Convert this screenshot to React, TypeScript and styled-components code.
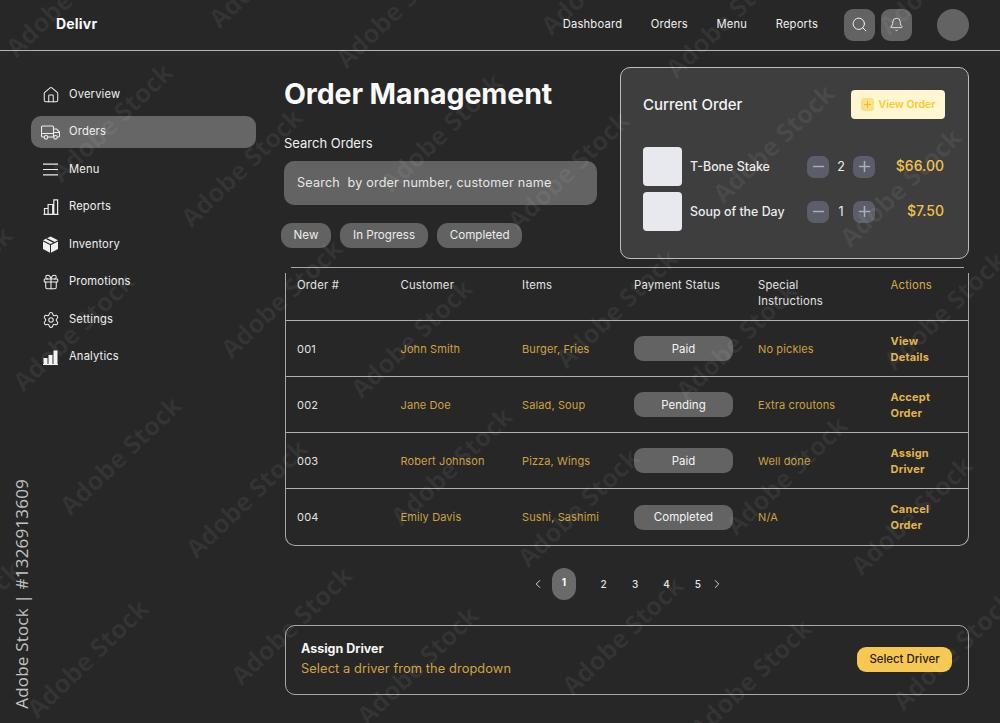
import React from "react";
import styled, { createGlobalStyle } from "styled-components";
import { Search, Bell, Home, Gift, Settings, ChevronLeft, ChevronRight, Plus, Minus } from "lucide-react";

const Global = createGlobalStyle`
  html, body { margin: 0; padding: 0; background: #272727; }
  * { box-sizing: border-box; }
  body { font-family: Inter, "Liberation Sans", sans-serif; color: #f0f0f0; }
`;

const Page = styled.div`
  position: relative;
  width: 1000px;
  height: 723px;
  overflow: hidden;
  background: #272727;
`;

const TopBar = styled.header`
  height: 51px;
  border-bottom: 1px solid #b4b4b4;
  display: flex;
  align-items: center;
  padding: 0 31px 1px 56px;
`;

const Brand = styled.div`
  font-size: 14px;
  font-weight: 700;
  letter-spacing: 0.2px;
  color: #fafafa;
  flex: 1;
  margin-bottom: 2px;
`;

const TopNav = styled.nav`
  display: flex;
  gap: 28.5px;
  margin-right: 26px;
  margin-bottom: 1px;
`;

const TopLink = styled.a`
  font-size: 11.2px;
  font-weight: 400;
  letter-spacing: 0.2px;
  color: #f0f0f0;
`;

const IconSquare = styled.button`
  width: 31px;
  height: 32px;
  border-radius: 9px;
  border: 0;
  background: #636363;
  color: #f0f0f0;
  display: grid;
  place-items: center;
  padding: 0;
  & + & { margin-left: 6px; }
`;

const Avatar = styled.div`
  width: 32px;
  height: 32px;
  border-radius: 50%;
  background: #636363;
  margin-left: 25px;
`;

const Body = styled.div`
  display: flex;
  padding-left: 31px;
`;

const Sidebar = styled.aside`
  width: 225px;
  margin-right: 29px;
  padding-top: 27.5px;
  display: flex;
  flex-direction: column;
  gap: 5.5px;
`;

const NavItem = styled.div<{ $active?: boolean }>`
  height: 32px;
  border-radius: 10px;
  display: flex;
  align-items: center;
  padding-left: 10px;
  font-size: 11.2px;
  font-weight: 400;
  letter-spacing: 0.15px;
  color: #f0f0f0;
  background: ${(p) => (p.$active ? "#666666" : "transparent")};
`;

const NavIconSlot = styled.span`
  width: 19px;
  height: 20px;
  margin-right: 9px;
  display: grid;
  place-items: center;
  flex: none;
`;

const NavLabel = styled.span`
  padding-bottom: 2px;
`;

const Main = styled.main`
  width: 684px;
  display: flex;
  flex-direction: column;
`;

const TopRow = styled.div`
  display: flex;
  justify-content: space-between;
  padding-top: 16px;
  height: 216px;
`;

const LeftCol = styled.div`
  width: 313px;
  margin-left: -1px;
`;

const Title = styled.h1`
  margin: 8px 0 0;
  font-size: 28.5px;
  line-height: 38px;
  font-weight: 700;
  letter-spacing: -0.1px;
  color: #fafafa;
  white-space: nowrap;
`;

const SearchLabel = styled.div`
  margin-top: 21px;
  font-size: 13px;
  font-weight: 400;
  line-height: 18px;
  color: #f0f0f0;
`;

const SearchBox = styled.div`
  margin-top: 9px;
  height: 44px;
  border-radius: 10px;
  background: #636363;
  display: flex;
  align-items: center;
  padding: 0 0 2px 13px;
  font-size: 12.6px;
  letter-spacing: 0.2px;
  color: #e6e6e6;
  white-space: pre;
`;

const Filters = styled.div`
  display: flex;
  gap: 9.5px;
  margin: 18px 0 0 -3px;
`;

const Pill = styled.span`
  height: 25px;
  border-radius: 11px;
  background: #626262;
  padding: 0 12.6px 2px;
  display: flex;
  align-items: center;
  font-size: 11.6px;
  font-weight: 400;
  color: #ececec;
`;

const OrderCard = styled.section`
  width: 349px;
  height: 192px;
  border: 1px solid #bdbdbd;
  border-radius: 10px;
  background: #3e3e3e;
  padding: 22px 23px 0 22px;
`;

const CardHead = styled.div`
  display: flex;
  align-items: center;
  justify-content: space-between;
  margin-bottom: 28px;
`;

const CardTitle = styled.div`
  font-size: 15px;
  font-weight: 500;
  color: #f5f5f5;
`;

const ViewBtn = styled.div`
  width: 94px;
  height: 29px;
  border-radius: 4px;
  background: #fff6d2;
  color: #f7c92f;
  font-size: 10.5px;
  font-weight: 600;
  display: flex;
  align-items: center;
  justify-content: center;
  gap: 5px;
`;

const PlusChip = styled.span`
  width: 13px;
  height: 13px;
  border-radius: 3px;
  background: #fbe08a;
  display: grid;
  place-items: center;
  color: #f3b91f;
`;

const ItemRow = styled.div`
  display: flex;
  align-items: center;
  height: 39px;
  margin-bottom: 6px;
`;

const Thumb = styled.div`
  width: 39px;
  height: 39px;
  border-radius: 4px;
  background: #e8e9ef;
  margin-right: 8px;
  flex: none;
`;

const ItemName = styled.div`
  font-size: 12.4px;
  font-weight: 500;
  color: #ececec;
  width: 117px;
`;

const Stepper = styled.div`
  display: flex;
  align-items: center;
  width: 68px;
`;

const StepBtn = styled.span`
  width: 22px;
  height: 22px;
  border-radius: 7px;
  background: #5b5d69;
  color: #a9acbd;
  display: grid;
  place-items: center;
  flex: none;
`;

const Qty = styled.span`
  width: 24px;
  text-align: center;
  font-size: 12.5px;
  color: #eee;
`;

const Price = styled.div`
  flex: 1;
  text-align: right;
  font-size: 14px;
  font-weight: 500;
  color: #f0c14b;
  margin: 0 1px 3px 0;
`;

const Table = styled.section`
  position: relative;
  width: 684px;
  height: 279px;
  border: 1px solid #a8a8a8;
  border-top-color: transparent;
  border-radius: 0 0 10px 10px;

  &::before {
    content: "";
    position: absolute;
    top: -1px;
    left: 5px;
    right: 4px;
    height: 1px;
    background: #a8a8a8;
  }

  &::after {
    content: "";
    position: absolute;
    top: -1px;
    left: -1px;
    right: -1px;
    height: 6px;
    border-left: 1px solid #272727;
    border-right: 1px solid #272727;
  }
`;

const Row = styled.div<{ $head?: boolean; $h: number; $last?: boolean }>`
  display: grid;
  grid-template-columns: 103.5px 121.5px 112px 124px 132.5px 1fr;
  padding-left: 11px;
  height: ${(p) => p.$h}px;
  align-items: ${(p) => (p.$head ? "start" : "center")};
  padding-top: ${(p) => (p.$head ? "9px" : "0")};
  border-bottom: ${(p) => (p.$last ? "0" : "1px solid #b0b0b0")};
`;

const Cell = styled.div`
  font-size: 11px;
  line-height: 16px;
  letter-spacing: 0.2px;
  color: #e2e2e2;
`;

const HeadCell = styled(Cell)`
  font-size: 11.3px;
  font-weight: 400;
  letter-spacing: 0.2px;
`;

const GoldCell = styled(Cell)`
  letter-spacing: 0.12px;
  color: #cda23f;
`;

const ActionHead = styled(HeadCell)`
  color: #d9ad45;
`;

const ActionCell = styled(Cell)`
  font-weight: 700;
  color: #e3b547;
  width: 50px;
`;

const Status = styled.span`
  width: 99px;
  height: 25px;
  border-radius: 9px;
  background: #636363;
  display: flex;
  align-items: center;
  justify-content: center;
  font-size: 11.5px;
  font-weight: 400;
  color: #f4f4f4;
`;

const Pager = styled.div`
  display: flex;
  align-items: center;
  height: 32px;
  margin: 22px 0 0 247px;
  color: #ececec;
  font-size: 10px;
`;

const PagerArrow = styled.span`
  width: 21px;
  display: flex;
  justify-content: flex-start;
  margin-left: -1px;
`;

const PageNum = styled.span<{ $active?: boolean }>`
  width: ${(p) => (p.$active ? 24 : 31.4)}px;
  height: 32px;
  display: grid;
  place-items: center;
  border-radius: 12px;
  font-weight: ${(p) => (p.$active ? 700 : 500)};
  background: ${(p) => (p.$active ? "#6a6a6a" : "transparent")};
  color: ${(p) => (p.$active ? "#fff" : "#e4e4e4")};
  padding-bottom: ${(p) => (p.$active ? "4px" : "0")};
  margin-right: ${(p) => (p.$active ? "12px" : "0")};
`;

const ArrowRight = styled.span`
  display: flex;
  margin-left: -4px;
`;

const AssignPanel = styled.section`
  margin-top: 25px;
  height: 70px;
  border: 1px solid #a8a8a8;
  border-radius: 10px;
  display: flex;
  align-items: center;
  justify-content: space-between;
  padding: 0 16px 0 15px;
`;

const AssignText = styled.div`
  margin-bottom: 3px;
`;

const AssignTitle = styled.div`
  font-size: 12.5px;
  font-weight: 700;
  line-height: 19px;
  color: #f6f6f6;
`;

const AssignSub = styled.div`
  font-size: 12.8px;
  line-height: 21px;
  letter-spacing: 0.1px;
  color: #cfa53f;
`;

const SelectBtn = styled.div`
  width: 95px;
  height: 25px;
  border-radius: 9px;
  background: #f6c751;
  color: #26221a;
  font-size: 11.4px;
  font-weight: 500;
  display: grid;
  place-items: center;
  margin-bottom: 2px;
`;

const StockId = styled.div`
  position: absolute;
  left: 11px;
  bottom: 14px;
  writing-mode: vertical-rl;
  transform: rotate(180deg);
  font-family: "Open Sans", sans-serif;
  font-size: 17px;
  line-height: 22px;
  font-weight: 500;
  letter-spacing: 0.2px;
  color: #c2c2c2;
  white-space: nowrap;
`;

const Watermarks = styled.div`
  position: absolute;
  inset: 0;
  pointer-events: none;
  overflow: hidden;
`;

const Mark = styled.span.attrs<{ $x: number; $y: number }>((p) => ({
  style: { left: p.$x, top: p.$y },
}))<{ $x: number; $y: number }>`
  position: absolute;
  transform: translate(-50%, -50%) rotate(-44deg);
  font-family: "Open Sans", sans-serif;
  font-size: 25.5px;
  font-weight: 700;
  color: rgba(255, 255, 255, 0.06);
  white-space: nowrap;
`;

const TruckIcon = () => (
  <svg width="19" height="15" viewBox="0 0 19 15" fill="none" stroke="#ececec" strokeWidth="1.1">
    <path d="M3 12H1.5a1 1 0 0 1-1-1V2a1 1 0 0 1 1-1h10a1 1 0 0 1 1 1v10H7" />
    <path d="M12.5 4h3.2l2.8 3v4a1 1 0 0 1-1 1h-1M12 12h.5M.5 8.5h12M12.5 7.5h6" />
    <circle cx="5" cy="12.3" r="1.8" />
    <circle cx="14.5" cy="12.3" r="1.8" />
  </svg>
);

const MenuLines = () => (
  <svg width="15" height="13" viewBox="0 0 15 13" fill="none" stroke="#ececec" strokeWidth="1.2">
    <path d="M0 1.2h15M0 6.5h15M0 11.8h15" />
  </svg>
);

const BarsOutline = () => (
  <svg width="16" height="16" viewBox="0 0 16 16" fill="none" stroke="#ececec" strokeWidth="1.2">
    <path d="M.5 15.4h15M1.5 15V9.5h3.6V15M5.1 15V5.5h4.6V15M10.8 15V.8h3.8V15" />
  </svg>
);

const BoxIcon = () => (
  <svg width="17" height="17" viewBox="0 0 17 17">
    <path d="M8.5.5 1 4.3l7.5 3.6L16 4.3z" fill="#f0f0f0" />
    <path d="M1 5.5v7.6l7 3.6V9z" fill="#f0f0f0" />
    <path d="M9 9v7.7l7-3.6V5.5z" fill="#f0f0f0" />
    <path d="M4.6 2.7l7.5 3.6" stroke="#272727" strokeWidth="1.3" />
  </svg>
);

const BarsFilled = () => (
  <svg width="15" height="15" viewBox="0 0 15 15" fill="#f4f4f4">
    <rect x="0.5" y="8" width="4" height="6" />
    <rect x="5.5" y="5" width="4" height="9" />
    <rect x="10.5" y="0.5" width="4" height="13.5" />
    <rect x="0" y="14" width="15" height="1" />
  </svg>
);

const nav: [string, React.ReactNode, boolean?][] = [
  ["Overview", <Home size={18} strokeWidth={1.35} />],
  ["Orders", <TruckIcon />, true],
  ["Menu", <MenuLines />],
  ["Reports", <BarsOutline />],
  ["Inventory", <BoxIcon />],
  ["Promotions", <Gift size={18} strokeWidth={1.4} />],
  ["Settings", <Settings size={18} strokeWidth={1.35} />],
  ["Analytics", <BarsFilled />],
];

const rows = [
  { id: "001", c: "John Smith", i: "Burger, Fries", s: "Paid", n: "No pickles", a: "View Details", h: 56 },
  { id: "002", c: "Jane Doe", i: "Salad, Soup", s: "Pending", n: "Extra croutons", a: "Accept Order", h: 56 },
  { id: "003", c: "Robert Johnson", i: "Pizza, Wings", s: "Paid", n: "Well done", a: "Assign Driver", h: 56 },
  { id: "004", c: "Emily Davis", i: "Sushi, Sashimi", s: "Completed", n: "N/A", a: "Cancel Order", h: 56 },
];

const marks: [number, number][] = [
  [66, -3], [269, -32], [396, 8], [601, -25], [726, 18], [939, -25],
  [111, 122], [241, 167], [441, 132], [568, 170], [773, 143], [900, 187],
  [73, 331], [281, 298], [411, 338], [616, 308], [736, 340], [944, 310],
  [120, 455], [246, 498], [451, 466], [578, 507], [786, 475], [911, 515],
  [87, 658], [291, 625], [417, 665], [622, 635], [750, 678], [953, 650],
  [-40, 620], [-49, 285],
];

export default function App() {
  return (
    <Page>
      <Global />
      <TopBar>
        <Brand>Delivr</Brand>
        <TopNav>
          <TopLink>Dashboard</TopLink>
          <TopLink>Orders</TopLink>
          <TopLink>Menu</TopLink>
          <TopLink>Reports</TopLink>
        </TopNav>
        <IconSquare><Search size={17} strokeWidth={1.4} /></IconSquare>
        <IconSquare><Bell size={15} strokeWidth={1.4} /></IconSquare>
        <Avatar />
      </TopBar>
      <Body>
        <Sidebar>
          {nav.map(([label, icon, active]) => (
            <NavItem key={label} $active={active}>
              <NavIconSlot>{icon}</NavIconSlot>
              <NavLabel>{label}</NavLabel>
            </NavItem>
          ))}
        </Sidebar>
        <Main>
          <TopRow>
            <LeftCol>
              <Title>Order Management</Title>
              <SearchLabel>Search Orders</SearchLabel>
              <SearchBox>Search  by order number, customer name</SearchBox>
              <Filters>
                <Pill>New</Pill>
                <Pill>In Progress</Pill>
                <Pill>Completed</Pill>
              </Filters>
            </LeftCol>
            <OrderCard>
              <CardHead>
                <CardTitle>Current Order</CardTitle>
                <ViewBtn><PlusChip><Plus size={11} strokeWidth={2} /></PlusChip>View Order</ViewBtn>
              </CardHead>
              <ItemRow>
                <Thumb />
                <ItemName>T-Bone Stake</ItemName>
                <Stepper>
                  <StepBtn><Minus size={17} strokeWidth={2.2} /></StepBtn>
                  <Qty>2</Qty>
                  <StepBtn><Plus size={17} strokeWidth={2.2} /></StepBtn>
                </Stepper>
                <Price>$66.00</Price>
              </ItemRow>
              <ItemRow>
                <Thumb />
                <ItemName>Soup of the Day</ItemName>
                <Stepper>
                  <StepBtn><Minus size={17} strokeWidth={2.2} /></StepBtn>
                  <Qty>1</Qty>
                  <StepBtn><Plus size={17} strokeWidth={2.2} /></StepBtn>
                </Stepper>
                <Price>$7.50</Price>
              </ItemRow>
            </OrderCard>
          </TopRow>
          <Table>
            <Row $head $h={53}>
              <HeadCell>Order #</HeadCell>
              <HeadCell>Customer</HeadCell>
              <HeadCell>Items</HeadCell>
              <HeadCell>Payment Status</HeadCell>
              <HeadCell>Special<br />Instructions</HeadCell>
              <ActionHead>Actions</ActionHead>
            </Row>
            {rows.map((r, i) => (
              <Row key={r.id} $h={r.h} $last={i === rows.length - 1}>
                <Cell>{r.id}</Cell>
                <GoldCell>{r.c}</GoldCell>
                <GoldCell>{r.i}</GoldCell>
                <Status>{r.s}</Status>
                <GoldCell>{r.n}</GoldCell>
                <ActionCell>{r.a}</ActionCell>
              </Row>
            ))}
          </Table>
          <Pager>
            <PagerArrow><ChevronLeft size={14} strokeWidth={1.5} /></PagerArrow>
            <PageNum $active>1</PageNum>
            <PageNum>2</PageNum>
            <PageNum>3</PageNum>
            <PageNum>4</PageNum>
            <PageNum>5</PageNum>
            <ArrowRight><ChevronRight size={14} strokeWidth={1.5} /></ArrowRight>
          </Pager>
          <AssignPanel>
            <AssignText>
              <AssignTitle>Assign Driver</AssignTitle>
              <AssignSub>Select a driver from the dropdown</AssignSub>
            </AssignText>
            <SelectBtn>Select Driver</SelectBtn>
          </AssignPanel>
        </Main>
      </Body>
      <StockId>Adobe Stock | #1326913609</StockId>
      <Watermarks>
        {marks.map(([x, y]) => (
          <Mark key={`${x}-${y}`} $x={x} $y={y}>Adobe Stock</Mark>
        ))}
      </Watermarks>
    </Page>
  );
}
